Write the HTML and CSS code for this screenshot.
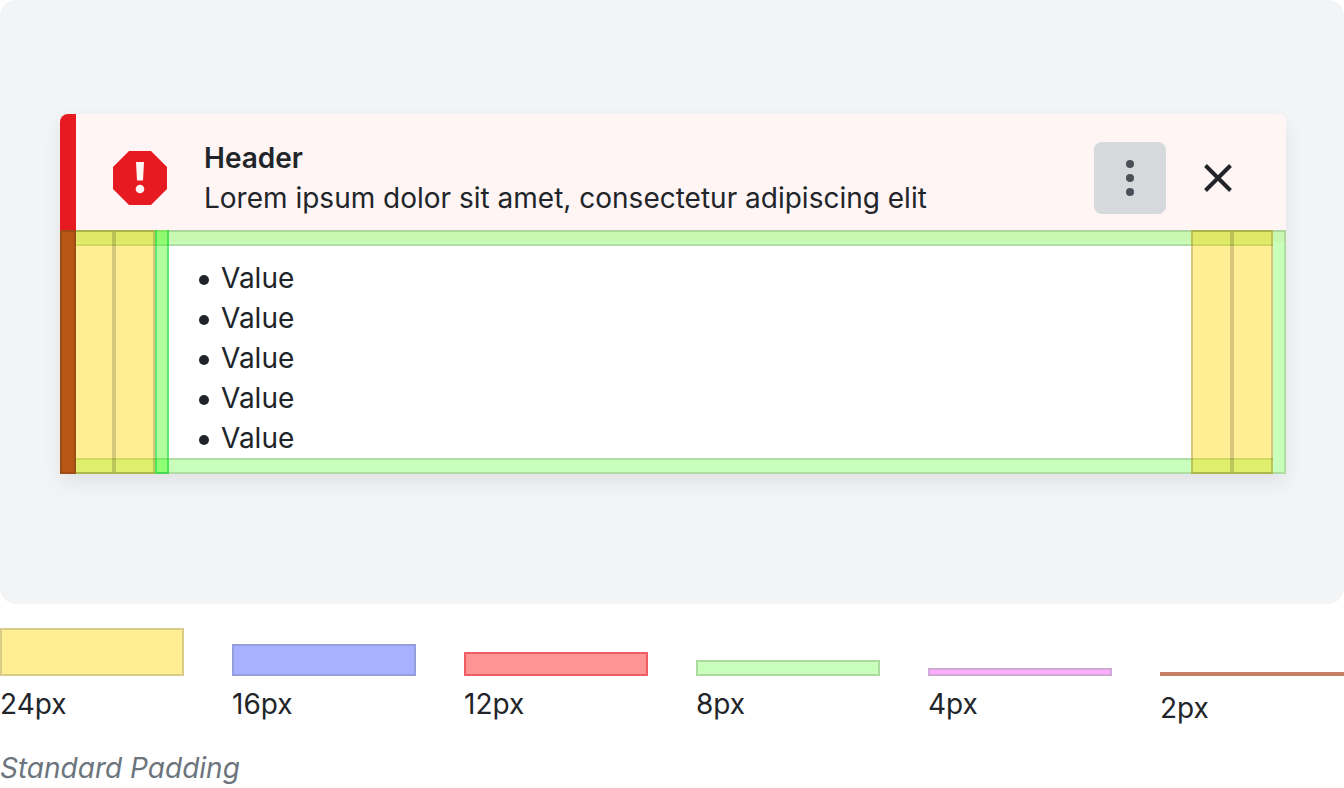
FILE: index.html
```html
<!DOCTYPE html>
<html lang="en">
<head>
    <meta charset="UTF-8">
    <meta name="viewport" content="width=device-width, initial-scale=1.0">
    <title>Standard Padding</title>
    <link rel="stylesheet" href="styles.css">
</head>
<body>
    <figure class="figure">
        <div class="stage">
            <section class="alert">
                <header class="alert-header">
                    <svg class="alert-icon" viewBox="0 0 56 56" aria-hidden="true">
                        <path fill="#e61a20" d="M17 1h22l16 16v22L39 55H17L1 39V17z"/>
                        <path fill="#fff5f5" d="M24 12h8l-1 18.500h-6z"/>
                        <circle fill="#fff5f5" cx="28" cy="39" r="4.300"/>
                    </svg>
                    <div class="alert-text">
                        <h2>Header</h2>
                        <p>Lorem ipsum dolor sit amet, consectetur adipiscing elit</p>
                    </div>
                    <div class="alert-actions">
                        <button type="button" class="icon-button icon-button-active" aria-label="More options">
                            <svg viewBox="0 0 40 40" fill="#495057">
                                <circle cx="20" cy="6" r="4"/>
                                <circle cx="20" cy="20" r="4"/>
                                <circle cx="20" cy="34" r="4"/>
                            </svg>
                        </button>
                        <button type="button" class="icon-button" aria-label="Close">
                            <svg viewBox="0 0 40 40" stroke="#212529" stroke-width="4">
                                <path d="M7.500 7.500l25 25M32.500 7.500l-25 25"/>
                            </svg>
                        </button>
                    </div>
                </header>
                <div class="alert-body">
                    <ul>
                        <li>Value</li>
                        <li>Value</li>
                        <li>Value</li>
                        <li>Value</li>
                        <li>Value</li>
                    </ul>
                    <!-- spacing guides drawn over the content -->
                    <div class="guides" aria-hidden="true">
                        <div class="guide-rows">
                            <span class="green"></span>
                            <span class="green"></span>
                        </div>
                        <div class="guide-columns">
                            <span class="edge green"></span>
                            <span class="wide yellow"></span>
                            <span class="wide yellow"></span>
                            <span class="narrow bright"></span>
                            <span class="spacer"></span>
                            <span class="wide yellow"></span>
                            <span class="wide yellow"></span>
                            <span class="trim green"></span>
                        </div>
                    </div>
                </div>
            </section>
        </div>
        <ul class="legend">
            <li><span class="swatch"><i class="bar bar-24"></i></span>24px</li>
            <li><span class="swatch"><i class="bar bar-16"></i></span>16px</li>
            <li><span class="swatch"><i class="bar bar-12"></i></span>12px</li>
            <li><span class="swatch"><i class="bar bar-8"></i></span>8px</li>
            <li><span class="swatch"><i class="bar bar-4"></i></span>4px</li>
            <li class="legend-thin"><span class="swatch"><i class="bar bar-2"></i></span>2px</li>
        </ul>
        <figcaption>Standard Padding</figcaption>
    </figure>
</body>
</html>
```

FILE: styles.css
```css
* { box-sizing: border-box; }
body { margin: 0; background: #fff; color: #212529; font-family: Inter, sans-serif; font-size: 28px; font-optical-sizing: none; line-height: 40px; }
h2, p, ul, figure { margin: 0; padding: 0; }
h2 { font-size: 28px; font-weight: 600; }
ul { list-style: none; }

.stage { padding: 114px 58px 130px 60px; background: #f3f4f6; border-radius: 16px; }

/* alert */
.alert { border-left: 16px solid #e61a20; border-radius: 8px 8px 0 0; background: #fff; box-shadow: 0 8px 20px rgba(0, 0, 0, 0.08); }
.alert-header { display: flex; align-items: center; padding: 24px 32px 24px 36px; gap: 36px; background: #fff5f5; border-top-right-radius: 8px; }
.alert-icon { width: 56px; height: 56px; flex: none; }
.alert-text { flex: 1; }
.alert-actions { display: flex; gap: 16px; }
.icon-button { display: flex; align-items: center; justify-content: center; width: 72px; height: 72px; padding: 0; border: none; border-radius: 8px; background: none; cursor: pointer; }
.icon-button svg { width: 40px; height: 40px; }
.icon-button-active { background: #d5d9dc; }
.alert-body { position: relative; padding: 16px 0; }
.alert-body li { display: flex; align-items: center; gap: 12px; padding-left: 123px; }
.alert-body li::before { content: ""; width: 10px; height: 10px; margin-top: 4px; border-radius: 50%; background: #212529; }

/* spacing guides */
.guides { position: absolute; top: -12px; right: 0; bottom: 0; left: -16px; pointer-events: none; }
.guide-rows { position: absolute; inset: 0 13px 0 16px; display: flex; flex-direction: column; justify-content: space-between; }
.guide-rows span { height: 16px; border-left: none; border-right: none; }
.guide-columns { position: absolute; inset: 0; display: flex; }
.edge { width: 16px; }
.wide { width: 41px; }
.narrow { width: 14px; }
.spacer { flex: 1; }
.trim { width: 13px; }
.green { background: rgba(50, 255, 0, 0.27); border: 2px solid rgba(0, 0, 0, 0.13); }
.yellow { background: rgba(255, 214, 0, 0.42); border: 2px solid rgba(0, 0, 0, 0.16); }
.bright { background: rgba(50, 255, 0, 0.38); border: 2px solid rgba(0, 200, 60, 0.45); border-top: none; }
.edge + .wide { width: 38px; border-left: none; }
.guide-columns .trim { border-left: none; }

/* legend */
.legend { display: grid; grid-template-columns: repeat(6, 1fr); gap: 48px; padding-top: 24px; }
.legend li { display: flex; flex-direction: column; gap: 8px; }
.legend .legend-thin { gap: 12px; }
.swatch { display: flex; align-items: flex-end; height: 48px; }
.bar { flex: 1; border: 2px solid; }
.bar-24 { height: 48px; background: #ffee93; border-color: #d7cd89; }
.bar-16 { height: 32px; background: #a6b2ff; border-color: #959fdb; }
.bar-12 { height: 24px; background: #ff9494; border-color: #ef5c64; }
.bar-8 { height: 16px; background: #c8ffbb; border-color: #acdba2; }
.bar-4 { height: 8px; background: #ffadff; border-color: #d1a9d8; }
.bar-2 { height: 4px; border-color: #c68065; }
figcaption { padding-top: 20px; color: #6c757d; font-style: italic; }
```
